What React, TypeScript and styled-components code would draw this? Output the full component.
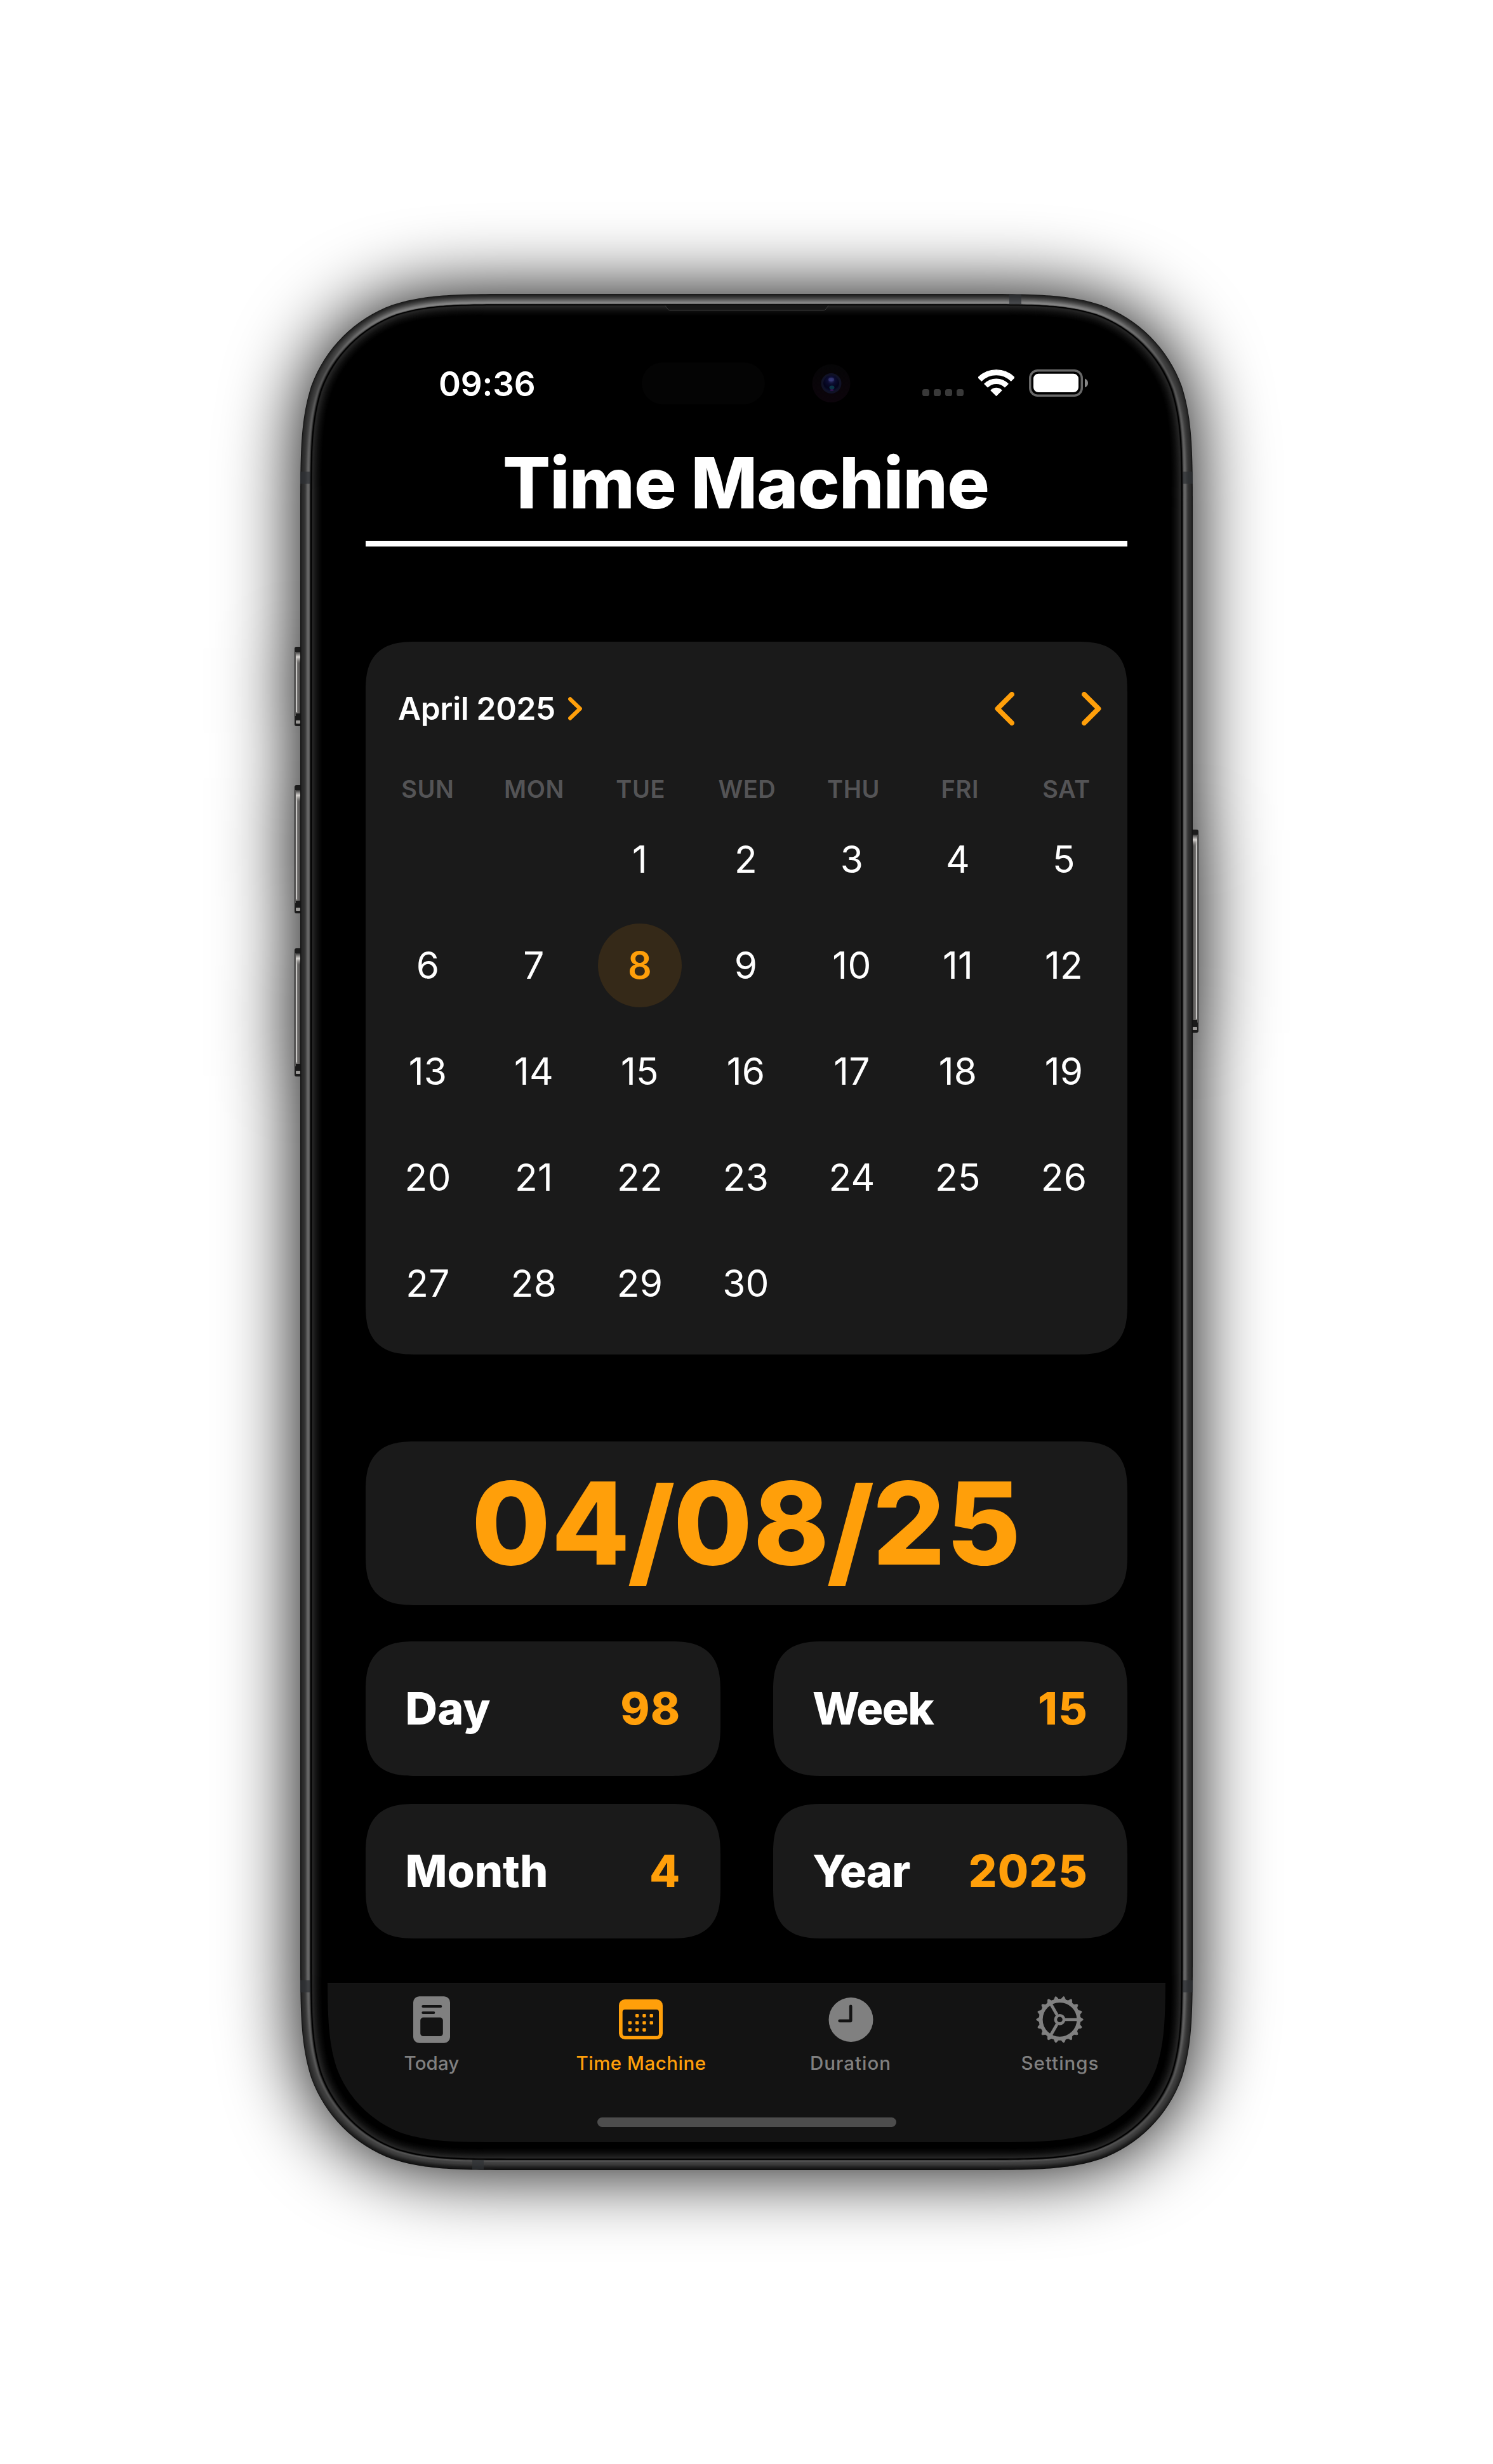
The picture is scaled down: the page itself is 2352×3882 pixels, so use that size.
import React from "react";
import styled, { createGlobalStyle, css } from "styled-components";

/* ---------- palette ---------- */

const c = {
  accent: "#ff9f0a",
  card: "#1a1a1a",
  bar: "#131313",
  muted: "#808080",
  weekday: "#545456",
};

const GlobalStyle = createGlobalStyle`
  * { box-sizing: border-box; }
  body {
    margin: 0;
    background: #fff;
    font-family: Inter, "Liberation Sans", sans-serif;
    -webkit-font-smoothing: antialiased;
  }
`;

/* ---------- device geometry ---------- */

const PHONE_W = 1406;
const PHONE_H = 2956;
const RADIUS = 230;

/** Rounded rectangle with continuous-curvature corners, inset from the device outline. */
function outline(inset: number, w = PHONE_W, h = PHONE_H, radius = RADIUS) {
  const r = radius - inset;
  const l = inset;
  const t = inset;
  const R = w - inset;
  const b = h - inset;
  const A = 1.52866483 * r;
  const B = 1.08849323 * r;
  const C = 0.86840689 * r;
  const D = 0.63149399 * r;
  const E = 0.074911 * r;
  const F = 0.37282392 * r;
  const G = 0.16906013 * r;
  return [
    `M${l + A} ${t}L${R - A} ${t}`,
    `C${R - B} ${t} ${R - C} ${t} ${R - D} ${t + E}`,
    `C${R - F} ${t + G} ${R - G} ${t + F} ${R - E} ${t + D}`,
    `C${R} ${t + C} ${R} ${t + B} ${R} ${t + A}`,
    `L${R} ${b - A}`,
    `C${R} ${b - B} ${R} ${b - C} ${R - E} ${b - D}`,
    `C${R - G} ${b - F} ${R - F} ${b - G} ${R - D} ${b - E}`,
    `C${R - C} ${b} ${R - B} ${b} ${R - A} ${b}`,
    `L${l + A} ${b}`,
    `C${l + B} ${b} ${l + C} ${b} ${l + D} ${b - E}`,
    `C${l + F} ${b - G} ${l + G} ${b - F} ${l + E} ${b - D}`,
    `C${l} ${b - C} ${l} ${b - B} ${l} ${b - A}`,
    `L${l} ${t + A}`,
    `C${l} ${t + B} ${l} ${t + C} ${l + E} ${t + D}`,
    `C${l + G} ${t + F} ${l + F} ${t + G} ${l + D} ${t + E}`,
    `C${l + C} ${t} ${l + B} ${t} ${l + A} ${t}Z`,
  ].join("");
}

/* Grey levels of the metal band, from its outer edge inwards. */
const band = {
  top: [24, 32, 38, 44, 50, 58, 66, 74, 84, 94, 104, 114, 124, 132, 134, 110, 36],
  corner: [20, 34, 40, 44, 48, 52, 56, 58, 60, 62, 66, 74, 82, 78, 58, 30, 10],
  side: [20, 30, 38, 42, 44, 46, 50, 56, 64, 76, 90, 100, 104, 98, 84, 48, 10],
  bottom: [14, 18, 24, 28, 32, 38, 44, 50, 56, 60, 62, 64, 68, 78, 90, 58, 10],
};
const grey = (v: number) => `rgb(${v},${v},${v})`;
const glow = [28, 36, 34, 30, 27, 24, 21, 18, 15, 13, 11, 9, 7, 5, 4, 2, 1, 0];

/* ---------- layout ---------- */

const Page = styled.main`
  width: 2352px;
  height: 3882px;
  padding: 463px 473px;
  background: #fff;
  overflow: hidden;
`;

const Phone = styled.div`
  position: relative;
  width: ${PHONE_W}px;
  height: ${PHONE_H}px;
  padding: 44px 43px;
`;

const FrameArt = styled.svg`
  position: absolute;
  top: 0;
  left: -12px;
  display: block;
  filter: drop-shadow(0 0 60px #000);
`;

const Sensors = styled.svg`
  position: absolute;
  top: 60px;
  left: 490px;
  display: block;
`;

const Screen = styled.div`
  position: relative;
  display: flex;
  flex-direction: column;
  width: 1320px;
  height: 2868px;
  background: #000;
  color: #fff;
  clip-path: path("${outline(0, 1320, 2868, 187)}");
`;

const StatusBar = styled.header`
  position: relative;
  display: flex;
  align-items: center;
  justify-content: space-between;
  height: 193px;
  padding: 0 122px 0 175px;
`;

const Clock = styled.time`
  padding-top: 2px;
  font-size: 53px;
  font-weight: 600;
  letter-spacing: -0.2px;
  line-height: 64px;
`;

const StatusIcons = styled.div`
  display: flex;
  align-items: center;
  gap: 23px;

  svg {
    display: block;
  }
`;

const Content = styled.section`
  display: flex;
  flex-direction: column;
  padding: 0 60px;
`;

const Title = styled.h1`
  margin: 0 0 31px;
  padding-right: 2px;
  font-size: 111px;
  font-weight: 800;
  line-height: 121px;
  letter-spacing: -0.8px;
  text-align: center;
`;

const Divider = styled.hr`
  width: 100%;
  height: 9px;
  margin: 0 0 150px;
  border: 0;
  background: #fff;
`;

const cardSurface = css`
  background: ${c.card};
  border-radius: 80px;
  corner-shape: superellipse(1.45);
`;

const CalendarCard = styled.section`
  ${cardSurface}
  height: 1123px;
  margin-bottom: 137px;
`;

const CalendarHeader = styled.div`
  display: flex;
  align-items: center;
  justify-content: space-between;
  height: 210px;
  padding: 0 41px 0 51px;

  svg {
    display: block;
  }
`;

const MonthButton = styled.div`
  display: flex;
  align-items: center;
  gap: 20px;
  font-size: 49.5px;
  font-weight: 600;
  letter-spacing: -0.3px;
  line-height: 60px;
`;

const MonthNav = styled.div`
  display: flex;
  gap: 106px;
`;

const Weekdays = styled.div`
  display: grid;
  grid-template-columns: repeat(7, 167.7px);
  padding-left: 14px;
  margin-bottom: 4px;
  color: ${c.weekday};
  font-size: 38px;
  font-weight: 600;
  letter-spacing: 0.6px;
  line-height: 45px;
  text-align: center;
`;

const Days = styled.div`
  display: grid;
  grid-template-columns: repeat(7, 167px);
  grid-auto-rows: 167px;
  place-items: center;
  padding-left: 14px;
`;

const Day = styled.span<{ $selected: boolean; $column?: number }>`
  display: grid;
  place-items: center;
  width: 132px;
  height: 132px;
  grid-column: ${(p) => p.$column ?? "auto"};
  padding-left: 1px;
  border-radius: 50%;
  font-size: ${(p) => (p.$selected ? 59 : 58.5)}px;
  font-weight: ${(p) => (p.$selected ? 600 : 400)};
  letter-spacing: 0.3px;
  color: ${(p) => (p.$selected ? c.accent : "#fff")};
  background: ${(p) => (p.$selected ? "#352918" : "transparent")};
`;

const DateCard = styled.section`
  ${cardSurface}
  display: flex;
  align-items: center;
  justify-content: center;
  height: 258px;
  margin-bottom: 57px;
  color: ${c.accent};
  font-size: 180px;
  font-weight: 800;
  line-height: 218px;
  letter-spacing: 1.3px;
`;

const Slash = styled.span`
  margin: 0 -4px 0 -5px;
  font-size: 187px;
  line-height: 0;
  vertical-align: -13px;
`;

const Stats = styled.div`
  display: grid;
  grid-template-columns: 1fr 1fr;
  gap: 44px 83px;
`;

const StatCard = styled.div`
  ${cardSurface}
  display: flex;
  align-items: center;
  justify-content: space-between;
  height: 212px;
  padding: 0 62px 0 62.5px;
  font-size: 70px;
  font-weight: 800;
  line-height: 84px;
`;

const StatLabel = styled.span<{ $tracking: number }>`
  letter-spacing: ${(p) => p.$tracking}px;
`;

const StatValue = styled.span`
  color: ${c.accent};
  letter-spacing: 1.2px;
`;

const TabBar = styled.nav`
  display: flex;
  flex-direction: column;
  align-items: center;
  height: 250px;
  margin-top: auto;
  padding-bottom: 24px;
  border-top: 1px solid #2b2b2b;
  background: ${c.bar};
`;

const Tabs = styled.div`
  display: grid;
  grid-template-columns: repeat(4, 330px);
  margin-left: -2px;
`;

const Tab = styled.div<{ $active?: boolean; $tracking: number }>`
  display: flex;
  flex-direction: column;
  align-items: center;
  gap: 12px;
  padding-top: 18px;
  color: ${(p) => (p.$active ? c.accent : c.muted)};
  font-size: 29.5px;
  font-weight: 500;
  line-height: 37px;
  letter-spacing: ${(p) => p.$tracking}px;

  svg {
    display: block;
  }
`;

const HomeIndicator = styled.div`
  width: 471px;
  height: 15px;
  margin-top: auto;
  border-radius: 8px;
  background: #4d4d4d;
`;

/* ---------- device drawing ---------- */

function SideButton({ x, y, h, flip }: { x: number; y: number; h: number; flip?: boolean }) {
  return (
    <g transform={flip ? `translate(${x + 9} ${y}) scale(-1 1)` : `translate(${x} ${y})`}>
      <rect width="12" height={h} rx="3" fill="#1c1c1c" />
      <rect x="1.5" y="8" width="8" height={h - 24} fill="url(#buttonFace)" />
      <rect x="2" y="12" width="1.8" height={h - 34} fill="#dcdad8" opacity="0.9" />
      <rect x="2" y="8" width="7" height="18" fill="url(#buttonShine)" />
      <rect x="2" y={h - 20} width="7" height="9" fill="#1a1a1a" />
      <rect x="2" y={h - 9} width="7" height="5" rx="1" fill="#9a9896" />
    </g>
  );
}

function Frame() {
  const stop = (y: number) => y / PHONE_H;
  return (
    <FrameArt width={PHONE_W + 24} height={PHONE_H} viewBox={`-12 0 ${PHONE_W + 24} ${PHONE_H}`} aria-hidden>
      <defs>
        <linearGradient id="buttonFace" x1="0" x2="1" y1="0" y2="0">
          <stop offset="0" stopColor="#8e8c8a" />
          <stop offset="1" stopColor="#4c4b4a" />
        </linearGradient>
        <linearGradient id="buttonShine" x1="0" x2="0" y1="0" y2="1">
          <stop offset="0" stopColor="#3a3a3a" />
          <stop offset="0.45" stopColor="#d8d5d2" />
          <stop offset="1" stopColor="#8a8886" stopOpacity="0" />
        </linearGradient>
        {band.top.map((_, i) => (
          <linearGradient key={i} id={`band${i}`} gradientUnits="userSpaceOnUse" x1="0" x2="0" y1="0" y2={PHONE_H}>
            <stop offset={stop(15)} stopColor={grey(band.top[i])} />
            <stop offset={stop(120)} stopColor={grey(band.corner[i])} />
            <stop offset={stop(300)} stopColor={grey(band.side[i])} />
            <stop offset={stop(PHONE_H - 300)} stopColor={grey(band.side[i])} />
            <stop offset={stop(PHONE_H - 120)} stopColor={grey(band.corner[i])} />
            <stop offset={stop(PHONE_H - 15)} stopColor={grey(band.bottom[i])} />
          </linearGradient>
        ))}
      </defs>
      <SideButton x={-9} y={556} h={125} />
      <SideButton x={-9} y={774} h={202} />
      <SideButton x={-9} y={1031} h={202} />
      <SideButton x={PHONE_W} y={844} h={320} flip />
      {band.top.map((_, i) => (
        <path key={i} d={outline(i)} fill={`url(#band${i})`} />
      ))}
      <g fill="#2f3235" opacity="0.75">
        <rect x="0" y="280" width="16" height="19" />
        <rect x={PHONE_W - 16} y="280" width="16" height="19" />
        <rect x="0" y="2657" width="16" height="19" />
        <rect x={PHONE_W - 16} y="2657" width="16" height="19" />
        <rect x="1117" y="1" width="19" height="15" />
        <rect x="271" y={PHONE_H - 16} width="18" height="15" />
      </g>
      <path d={outline(16.5)} fill="#000" />
      {glow.map((v, i) => (
        <path key={i} d={outline(18 + i)} fill={grey(v)} />
      ))}
      <path d="M575 18.5H832L828 24Q827 26 824 26H583Q580 26 579 24Z" fill="#161616" />
      <path d="M575 18.5L579 24Q580 26 583 26H824Q827 26 828 24L832 18.5" fill="none" stroke="#3a3a3a" strokeWidth="1" />
    </FrameArt>
  );
}

function SensorArt() {
  return (
    <Sensors width="340" height="76" viewBox="0 0 340 76" aria-hidden>
      <defs>
        <radialGradient id="lens" cx="0.5" cy="0.3" r="0.7">
          <stop offset="0" stopColor="#2c2f66" />
          <stop offset="0.35" stopColor="#0b0c30" />
          <stop offset="0.75" stopColor="#04041a" />
          <stop offset="1" stopColor="#0b1030" />
        </radialGradient>
        <linearGradient id="lensRing" x1="0" x2="0" y1="0" y2="1">
          <stop offset="0" stopColor="#050506" />
          <stop offset="1" stopColor="#0c040b" />
        </linearGradient>
      </defs>
      <rect x="5" y="4" width="194" height="66" rx="33" fill="#040404" />
      <circle cx="303.5" cy="37" r="30" fill="url(#lensRing)" />
      <circle cx="303.5" cy="37" r="16" fill="#101226" />
      <circle cx="303.5" cy="37" r="12.5" fill="url(#lens)" />
      <ellipse cx="303.5" cy="31" rx="4.5" ry="3" fill="#3d4186" opacity="0.6" />
      <ellipse cx="304.5" cy="43.5" rx="4" ry="3" fill="#0d5560" opacity="0.6" />
      <ellipse cx="304.5" cy="47.5" rx="3" ry="1.2" fill="#5a1a72" opacity="0.6" />
    </Sensors>
  );
}

/* ---------- icons ---------- */

const SignalDots = () => (
  <svg width="65" height="43" viewBox="0 0 65 43" fill="#393939">
    {[0, 18, 36, 54].map((x) => (
      <rect key={x} x={x} y="31" width="11" height="11" rx="3.6" />
    ))}
  </svg>
);

const sector = (outer: number, inner: number) => {
  const k = Math.SQRT1_2;
  const cx = 28.5;
  const cy = 41.3;
  const arc = `M${cx - outer * k} ${cy - outer * k}A${outer} ${outer} 0 0 1 ${cx + outer * k} ${cy - outer * k}`;
  return inner
    ? `${arc}L${cx + inner * k} ${cy - inner * k}A${inner} ${inner} 0 0 0 ${cx - inner * k} ${cy - inner * k}Z`
    : `${arc}L${cx} ${cy}Z`;
};

const Wifi = () => (
  <svg width="57" height="43" viewBox="0 0 57 43" fill="#fff" stroke="#fff" strokeWidth="1.4" strokeLinejoin="round">
    <path d={sector(40.4, 32.8)} />
    <path d={sector(26.2, 19)} />
    <path d={sector(11.8, 0)} />
  </svg>
);

const Battery = () => (
  <svg width="93" height="43" viewBox="0 0 93 43">
    <rect x="1.75" y="1.75" width="81.5" height="39.5" rx="12" fill="none" stroke="#686868" strokeWidth="3.5" />
    <rect x="7" y="6.7" width="71" height="29.3" rx="8" fill="#fff" />
    <path d="M88 14.5Q93 16.5 93 21.5Q93 26.5 88 28.5Z" fill="#868686" />
  </svg>
);

const SmallChevron = () => (
  <svg width="22" height="37" viewBox="0 0 22 37" fill="none" stroke={c.accent} strokeWidth="6.2" strokeLinecap="round" strokeLinejoin="round">
    <path d="M3.2 3.4L18.8 18.5L3.2 33.6" />
  </svg>
);

const Chevron = ({ left }: { left?: boolean }) => (
  <svg width="31" height="53" viewBox="0 0 31 53" fill="none" stroke={c.accent} strokeWidth="7.9" strokeLinecap="round" strokeLinejoin="round">
    <path d={left ? "M27 4L4.5 26.5L27 49" : "M4 4L26.5 26.5L4 49"} />
  </svg>
);

const TodayIcon = () => (
  <svg width="76" height="76" viewBox="0 0 76 76">
    <rect x="9" y="1.2" width="58" height="73.6" rx="9.5" fill="currentColor" />
    <rect x="22.3" y="15" width="32" height="4" rx="2" fill={c.bar} />
    <rect x="22.3" y="25" width="21" height="4" rx="2" fill={c.bar} />
    <rect x="20.2" y="34.6" width="35.6" height="29.4" rx="4.5" fill={c.bar} />
  </svg>
);

const calendarDots = [
  [2, 1], [3, 1], [4, 1],
  [1, 2], [2, 2], [3, 2], [4, 2],
  [1, 3], [2, 3], [3, 3],
];

const CalendarIcon = () => (
  <svg width="76" height="76" viewBox="0 0 76 76" fill="currentColor">
    <rect x="3" y="6" width="69" height="63" rx="9.5" />
    <rect x="8.7" y="22" width="57.3" height="41.7" rx="4" fill={c.bar} />
    {calendarDots.map(([col, row]) => (
      <rect key={`${col}-${row}`} x={6.35 + col * 11.3} y={17.9 + row * 11.15} width="5.4" height="5.4" rx="1.4" />
    ))}
  </svg>
);

const ClockIcon = () => (
  <svg width="76" height="76" viewBox="0 0 76 76">
    <circle cx="38.5" cy="38" r="35" fill="currentColor" />
    <path d="M38.2 16.8V39.8H20.7" fill="none" stroke={c.bar} strokeWidth="4.7" strokeLinecap="round" strokeLinejoin="round" />
  </svg>
);

const GearIcon = () => (
  <svg width="76" height="76" viewBox="0 0 76 76" fill="none" stroke="currentColor">
    <g transform="translate(37.5 37.8)">
      <circle r="29.9" strokeWidth="6" />
      <circle r="6.6" strokeWidth="4.6" />
      {[0, 120, 240].map((a) => (
        <path key={a} d="M8.5 0H28" strokeWidth="4.8" transform={`rotate(${a})`} />
      ))}
      {Array.from({ length: 18 }, (_, i) => (
        <path
          key={i}
          d="M31.5 -3.9L36 -1.2Q37.6 0 36 1.2L31.5 3.9Z"
          fill="currentColor"
          strokeWidth="0.8"
          strokeLinejoin="round"
          transform={`rotate(${i * 20})`}
        />
      ))}
    </g>
  </svg>
);

/* ---------- data ---------- */

const weekdays = ["SUN", "MON", "TUE", "WED", "THU", "FRI", "SAT"];
const FIRST_COLUMN = 3;
const SELECTED = 8;
const days = Array.from({ length: 30 }, (_, i) => i + 1);

const stats = [
  { label: "Day", value: "98", tracking: 0.2 },
  { label: "Week", value: "15", tracking: -1.5 },
  { label: "Month", value: "4", tracking: -0.1 },
  { label: "Year", value: "2025", tracking: -1 },
];

const tabs = [
  { label: "Today", icon: <TodayIcon />, tracking: 0.1 },
  { label: "Time Machine", icon: <CalendarIcon />, tracking: 0.5, active: true },
  { label: "Duration", icon: <ClockIcon />, tracking: 1 },
  { label: "Settings", icon: <GearIcon />, tracking: 1 },
];

export default function App() {
  return (
    <>
      <GlobalStyle />
      <Page>
        <Phone>
          <Frame />
          <Screen>
            <StatusBar>
              <Clock>09:36</Clock>
              <SensorArt />
              <StatusIcons>
                <SignalDots />
                <Wifi />
                <Battery />
              </StatusIcons>
            </StatusBar>

            <Content>
              <Title>Time Machine</Title>
              <Divider />

              <CalendarCard>
                <CalendarHeader>
                  <MonthButton>
                    April 2025
                    <SmallChevron />
                  </MonthButton>
                  <MonthNav>
                    <Chevron left />
                    <Chevron />
                  </MonthNav>
                </CalendarHeader>
                <Weekdays>
                  {weekdays.map((d) => (
                    <span key={d}>{d}</span>
                  ))}
                </Weekdays>
                <Days>
                  {days.map((d) => (
                    <Day key={d} $selected={d === SELECTED} $column={d === 1 ? FIRST_COLUMN : undefined}>
                      {d}
                    </Day>
                  ))}
                </Days>
              </CalendarCard>

              <DateCard>
                <span>
                  04<Slash>/</Slash>08<Slash>/</Slash>25
                </span>
              </DateCard>

              <Stats>
                {stats.map((s) => (
                  <StatCard key={s.label}>
                    <StatLabel $tracking={s.tracking}>{s.label}</StatLabel>
                    <StatValue>{s.value}</StatValue>
                  </StatCard>
                ))}
              </Stats>
            </Content>

            <TabBar>
              <Tabs>
                {tabs.map((t) => (
                  <Tab key={t.label} $active={t.active} $tracking={t.tracking}>
                    {t.icon}
                    {t.label}
                  </Tab>
                ))}
              </Tabs>
              <HomeIndicator />
            </TabBar>
          </Screen>
        </Phone>
      </Page>
    </>
  );
}
